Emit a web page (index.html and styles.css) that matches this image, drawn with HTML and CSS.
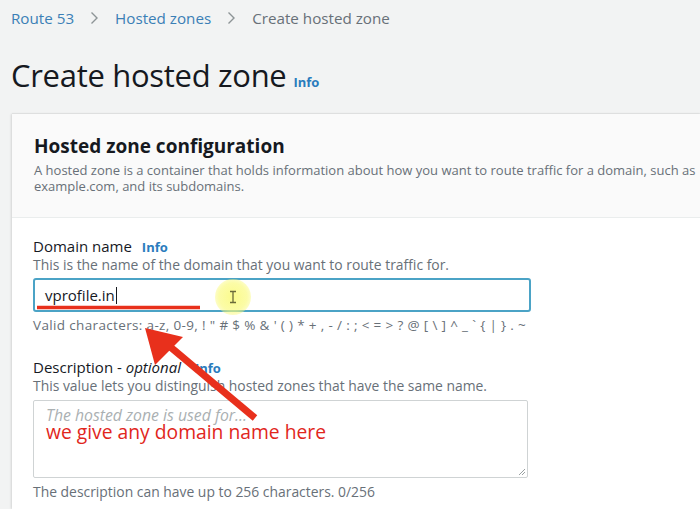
FILE: index.html
```html
<!DOCTYPE html>
<html>
<head>
<meta charset="utf-8">
<link rel="stylesheet" href="styles.css">
</head>
<body>
<div class="page">
  <nav class="crumbs">
    <a class="crumb-link">Route 53</a>
    <span class="chev"><svg width="9" height="14" viewBox="0 0 9 14"><path d="M1.5 1.5 L7 7 L1.5 12.5" fill="none" stroke="#8d9496" stroke-width="1.4"/></svg></span>
    <a class="crumb-link">Hosted zones</a>
    <span class="chev"><svg width="9" height="14" viewBox="0 0 9 14"><path d="M1.5 1.5 L7 7 L1.5 12.5" fill="none" stroke="#8d9496" stroke-width="1.4"/></svg></span>
    <span class="crumb-current">Create hosted zone</span>
  </nav>
  <div class="title-row">
    <h1 class="title">Create hosted zone</h1>
    <span class="info info-title">Info</span>
  </div>
  <section class="card">
    <div class="card-head">
      <h2 class="card-title">Hosted zone configuration</h2>
      <p class="card-desc">A hosted zone is a container that holds information about how you want to route traffic for a domain, such as example.com, and its subdomains.</p>
    </div>
    <div class="card-body">
      <div class="field">
        <div class="label-row"><span class="label">Domain name</span><span class="info">Info</span></div>
        <div class="hint">This is the name of the domain that you want to route traffic for.</div>
        <div class="input">vprofile.in<span class="caret"></span></div>
        <div class="constraint">Valid characters: a-z, 0-9, ! " # $ % &amp; ' ( ) * + , - / : ; &lt; = &gt; ? @ [ \ ] ^ _ ` { | } . ~</div>
      </div>
      <div class="field field-desc">
        <div class="label-row"><span class="label">Description - <i>optional</i></span><span class="info info-desc">Info</span></div>
        <div class="hint">This value lets you distinguish hosted zones that have the same name.</div>
        <div class="textarea">
          <div class="placeholder">The hosted zone is used for...</div>
          <div class="note">we give any domain name here</div>
          <svg class="grip" width="9" height="9" viewBox="0 0 9 9"><path d="M8 2 L2 8 M8 5 L5 8" stroke="#9aa0a2" stroke-width="1"/></svg>
        </div>
        <div class="constraint counter">The description can have up to 256 characters. 0/256</div>
      </div>
    </div>
  </section>
</div>
<div class="highlight"><svg width="10" height="14" viewBox="0 0 10 14"><path d="M2 1.5 H8 M5 1.5 V12.5 M2 12.5 H8" stroke="#6b6a3a" stroke-width="1.3" fill="none"/></svg></div>
<svg class="annot" width="700" height="509" viewBox="0 0 700 509">
  <line x1="37" y1="307.5" x2="200" y2="307.5" stroke="#e8301c" stroke-width="3.5"/>
  <line x1="255" y1="418" x2="168" y2="345" stroke="#e8301c" stroke-width="7"/>
  <polygon points="145,328 183,337 155,365" fill="#e8301c"/>
</svg>
</body>
</html>
```
FILE: styles.css
```css
html, body {
  margin: 0;
  padding: 0;
}
body {
  background: #f2f3f3;
  font-family: "Open Sans", "Liberation Sans", sans-serif;
  color: #16191f;
  width: 700px;
  height: 509px;
  overflow: hidden;
  position: relative;
}
.page {
  padding: 8px 0 0 11px;
}
.crumbs {
  display: flex;
  align-items: center;
  font-size: 15.2px;
  height: 20px;
}
.crumb-link {
  color: #3b7fb6;
}
.chev {
  display: flex;
  margin: 0 16px 0 16px;
}
.crumb-current {
  color: #687078;
}
.title-row {
  display: flex;
  align-items: baseline;
  margin-top: 27px;
  height: 40px;
}
.title {
  margin: 0;
  font-size: 31px;
  font-weight: 400;
  letter-spacing: -0.3px;
  line-height: 40px;
}
.info {
  color: #2a7cbd;
  font-weight: 700;
  font-size: 13px;
  margin-left: 10px;
}
.info-title {
  margin-left: 7px;
}
.info-desc {
  margin-left: 14px;
}
.card {
  margin-top: 19px;
  margin-left: 1px;
  width: 689px;
  background: #fff;
  box-shadow: -1px 0 2px rgba(0,0,0,0.12), 0 -1px 1px rgba(0,0,0,0.04);
}
.card-head {
  background: #fafafa;
  padding: 20px 0 0 22px;
  height: 83px;
  border-bottom: 1px solid #eaeded;
}
.card-title {
  margin: 0;
  font-size: 19px;
  font-weight: 700;
  line-height: 24px;
}
.card-desc {
  margin: 4px 0 0;
  font-size: 13px;
  line-height: 16px;
  color: #687078;
  width: 667px;
  white-space: normal;
}
.card-body {
  padding: 18px 0 9px 21px;
}
.label-row {
  display: flex;
  align-items: baseline;
  height: 20px;
}
.label {
  font-size: 15px;
  color: #16191f;
}
.label i {
  font-style: italic;
}
.hint {
  font-size: 13.9px;
  line-height: 17px;
  color: #687078;
}
.input {
  margin-top: 5px;
  width: 484px;
  height: 30px;
  border: 2px solid #4ba3c6;
  border-radius: 3px;
  background: #fff;
  font-size: 15px;
  padding-left: 10px;
  box-sizing: content-box;
  display: flex;
  align-items: center;
}
.caret {
  display: inline-block;
  width: 1px;
  height: 17px;
  background: #16191f;
  margin-left: 1px;
}
.constraint {
  font-size: 13.5px;
  line-height: 16px;
  color: #687078;
  margin-top: 5px;
  letter-spacing: 0.35px;
}
.field-desc {
  margin-top: 24px;
}
.textarea {
  position: relative;
  margin-top: 6px;
  width: 469px;
  height: 72px;
  border: 1px solid #cfd3d4;
  border-radius: 2px;
  background: #fff;
  padding: 4px 12px 0;
}
.placeholder {
  font-style: italic;
  color: #aab0b2;
  font-size: 15.8px;
  line-height: 20px;
}
.note {
  color: #e1261c;
  font-size: 19.3px;
  line-height: 20px;
  margin-top: -3px;
}
.grip {
  position: absolute;
  right: 1px;
  bottom: 1px;
}
.counter {
  margin-top: 6px;
  font-size: 13.9px;
  letter-spacing: 0;
}
.highlight {
  position: absolute;
  left: 215px;
  top: 279px;
  width: 36px;
  height: 36px;
  border-radius: 50%;
  background: radial-gradient(circle, rgba(250,250,120,0.85) 0%, rgba(250,250,120,0.65) 55%, rgba(250,250,120,0) 100%);
  display: flex;
  align-items: center;
  justify-content: center;
}
.annot {
  position: absolute;
  left: 0;
  top: 0;
  pointer-events: none;
}
```
